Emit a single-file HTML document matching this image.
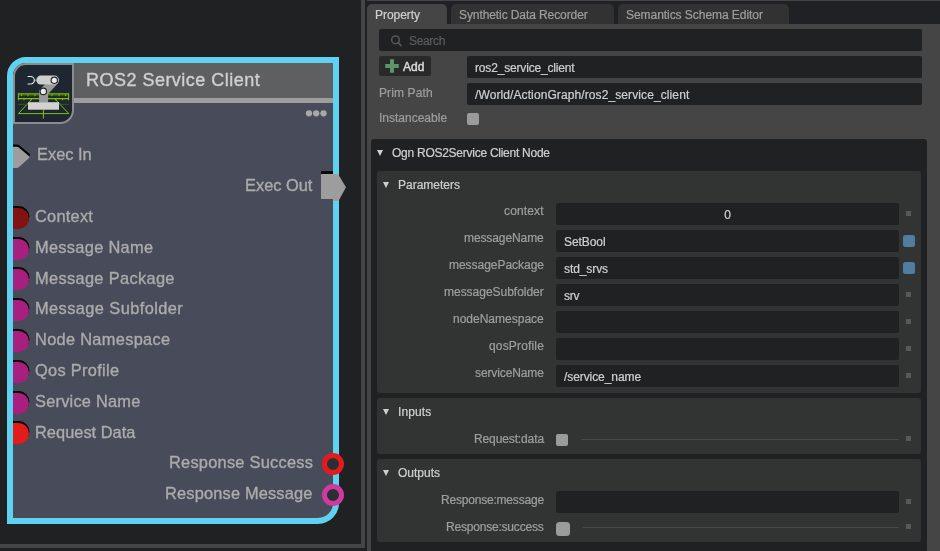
<!DOCTYPE html>
<html lang="en">
<head>
<meta charset="utf-8">
<title>ROS2 Service Client</title>
<style>
html,body{margin:0;padding:0;}
body{width:940px;height:551px;overflow:hidden;background:#202123;position:relative;font-family:"Liberation Sans",sans-serif;}
.abs{position:absolute;}
#title,.plabel,.lbl,.val,.tab span{will-change:transform;}
/* ---------- left graph canvas ---------- */
#canvas{left:0;top:0;width:361px;height:544px;background:#202123;}
#frameV{left:361px;top:0;width:4px;height:548px;background:#454545;}
#frameH{left:0;top:544px;width:365px;height:4px;background:#454545;}
/* node */
#node{left:7px;top:57px;width:320px;height:455px;border:6px solid #5fd2f2;border-radius:19px 0 21px 0;background:#484c5a;overflow:hidden;}
#hdr{left:0;top:0;width:320px;height:35px;background:#5e5f60;}
#stripe{left:0;top:35px;width:320px;height:5px;background:#9d9d9d;}
#iconbox{left:0;top:0;width:57px;height:56.5px;border:2px solid #8c8c8c;border-radius:13px 0 14px 0;background:#1e2731;}
#title{left:73px;top:6.4px;font-size:18px;line-height:22px;color:#cfcfcf;white-space:pre;letter-spacing:.48px;-webkit-text-stroke:.38px #cfcfcf;}
.dot{width:6.6px;height:6.6px;border-radius:50%;background:#a9a9a9;top:47px;}
.plabel{font-size:16.4px;line-height:20px;color:#ababab;white-space:pre;-webkit-text-stroke:.35px #ababab;}
.pl{left:22px;}
.pr{right:20.1px;text-align:right;}
.pin{left:-10.8px;width:27px;height:21px;border-radius:10.5px;box-shadow:.4px -1.9px 0 0 #0b0204;}
.ring{width:12px;height:12px;border:5px solid;border-radius:50%;background:#2a2f34;left:322.2px;}
/* ---------- property window ---------- */
#win{left:367px;top:0;width:573px;height:551px;background:#454545;}
#tabbar{left:0;top:1px;width:573px;height:23px;background:#202124;}
.tab{top:3px;height:20px;border-radius:5px 5px 0 0;background:#323232;color:#9e9e9e;font-size:12px;line-height:20px;white-space:pre;-webkit-text-stroke:.22px currentColor;}
.tab span{position:absolute;top:.8px;}
.field{background:#1f2123;border-radius:2px;}
.lbl{color:#9e9e9e;font-size:12px;line-height:14px;white-space:pre;-webkit-text-stroke:.22px currentColor;}
.val{color:#cfcfcf;font-size:12px;line-height:14px;white-space:pre;-webkit-text-stroke:.22px currentColor;}
.rl{right:396.5px;text-align:right;}
.tri{width:0;height:0;border-left:3.8px solid transparent;border-right:3.8px solid transparent;border-top:6.4px solid #cfcfcf;}
.sq{left:539px;width:5px;height:5px;background:#585858;}
.bsq{left:536px;width:12px;height:12px;border-radius:2.5px;background:#4f7ea1;}
.sub{left:10px;width:544px;background:#323434;border-radius:3px;}
.hl{left:214px;width:318px;height:1px;background:#484b4b;}
</style>
</head>
<body>
<div id="canvas" class="abs"></div>
<div id="frameV" class="abs"></div>
<div id="frameH" class="abs"></div>

<!-- ======== NODE ======== -->
<div id="node" class="abs">
  <div id="hdr" class="abs"></div>
  <div id="stripe" class="abs"></div>
  <div id="iconbox" class="abs">
    <svg class="abs" style="left:-2px;top:-2px" width="61" height="60" viewBox="13 63 61 60">
      <g stroke="#80c400" fill="none">
        <path d="M18 93.9H69M18 98.6H69" stroke-width="1.3"/>
        <path d="M18 95.6H69" stroke-width=".6" stroke="#4f7c00"/>
        <path d="M18.4 93.3V100.3M68.6 93.3V100.3" stroke-width="1"/>
        <path d="M18.4 113.6H68.8M32.4 98.6L18.4 113.6M54.5 98.6L68.8 113.6M43.4 109.5V118.6" stroke-width="1"/>
        <path d="M21.5 94V96.2M28 94V96.2M35 94V96.2M52 94V96.2M59 94V96.2M65.5 94V96.2M24 98.5V100.4M62.5 98.5V100.4M31 98.5V100.4M56 98.5V100.4" stroke-width=".9"/>
        <path d="M18 104.4H69" stroke="#3f5f12" stroke-width=".8"/>
      </g>
      <rect x="39.1" y="90" width="9" height="12.4" fill="#9a9a9a"/>
      <path d="M39.1 90.4L45 84.2L58 83.2L48.1 94Z" fill="#9a9a9a"/>
      <rect x="36.3" y="75.6" width="22.7" height="9" rx="4.5" fill="#cdcdcd"/>
      <rect x="28" y="102.2" width="31" height="7.5" fill="#d2d2d2"/>
      <circle cx="54.3" cy="80.3" r="3.2" fill="#ececec" stroke="#262626" stroke-width="1.2"/>
      <circle cx="43.3" cy="91.4" r="3.2" fill="#ececec" stroke="#262626" stroke-width="1.2"/>
      <path d="M27.6 76.5H30.6A3.75 3.75 0 0 1 30.6 84H27.6" fill="none" stroke="#e8e8e8" stroke-width="1.15"/>
      <path d="M34.6 80.2L36.8 79V81.4Z" fill="#a0a0a0"/>
    </svg>
  </div>
  <div id="title" class="abs">ROS2 Service Client</div>
  <svg class="abs" style="left:290px;top:44px" width="26" height="12" viewBox="303 107 26 12"><circle cx="309" cy="113.3" r="3.15" fill="#a8a8a8"/><circle cx="316.2" cy="113.3" r="3.15" fill="#a8a8a8"/><circle cx="323.5" cy="113.3" r="3.15" fill="#a8a8a8"/></svg>

  <!-- exec in -->
  <svg class="abs" style="left:0;top:78px" width="24" height="34" viewBox="13 141 24 34">
    <path d="M11 144.5H17.1Q18.3 144.5 19.2 145.3L29.5 153.7Q30.9 154.8 29.5 155.9L19.2 165.6Q18.3 166.4 17.1 166.4H11Z" fill="#070304"/>
    <path d="M11 146.8H16.7Q17.9 146.8 18.8 147.6L28.8 156Q30.1 157.1 28.8 158.2L18.8 167.2Q17.9 168 16.7 168H11Z" fill="#9d9d9d"/>
  </svg>
  <div class="abs plabel pl" style="top:81.1px;left:24px;letter-spacing:0">Exec In</div>
  <div class="abs plabel pr" style="top:111.9px;letter-spacing:0">Exec Out</div>

  <div class="abs pin" style="top:144.8px;background:#831212"></div>
  <div class="abs plabel pl" style="top:142.9px;letter-spacing:.23px">Context</div>
  <div class="abs pin" style="top:175.6px;background:#a8207f"></div>
  <div class="abs plabel pl" style="top:173.7px;letter-spacing:.3px">Message Name</div>
  <div class="abs pin" style="top:206.4px;background:#a8207f"></div>
  <div class="abs plabel pl" style="top:204.5px;letter-spacing:.33px">Message Package</div>
  <div class="abs pin" style="top:237.2px;background:#a8207f"></div>
  <div class="abs plabel pl" style="top:235.3px;letter-spacing:.41px">Message Subfolder</div>
  <div class="abs pin" style="top:268.0px;background:#a8207f"></div>
  <div class="abs plabel pl" style="top:266.1px;letter-spacing:.3px">Node Namespace</div>
  <div class="abs pin" style="top:298.8px;background:#a8207f"></div>
  <div class="abs plabel pl" style="top:296.9px;letter-spacing:.3px">Qos Profile</div>
  <div class="abs pin" style="top:329.6px;background:#a8207f"></div>
  <div class="abs plabel pl" style="top:327.7px;letter-spacing:.22px">Service Name</div>
  <div class="abs pin" style="top:360.4px;background:#e21b1b"></div>
  <div class="abs plabel pl" style="top:358.5px;letter-spacing:.02px">Request Data</div>
  <div class="abs plabel pr" style="top:389.3px;letter-spacing:.24px">Response Success</div>
  <div class="abs plabel pr" style="top:420.1px;letter-spacing:.17px">Response Message</div>
</div>
<!-- output ports drawn above border -->
<svg class="abs" style="left:318px;top:168px" width="32" height="36" viewBox="318 168 32 36">
  <rect x="321" y="171" width="12" height="4" fill="#070707"/>
  <path d="M321 174H338L346 187.3L338.5 201H333V199H321Z" fill="#9d9d9d"/>
</svg>
<div class="abs ring" style="top:453.4px;border-color:#e8191c"></div>
<div class="abs ring" style="top:484px;border-color:#d03aa0"></div>

<!-- ======== PROPERTY WINDOW ======== -->
<div id="win" class="abs">
  <div id="tabbar" class="abs"></div>
  <div class="abs tab" style="left:0;width:80px;background:#454545;color:#cfcfcf;top:4px;height:21px"><span style="left:7.6px;letter-spacing:-.05px">Property</span></div>
  <div class="abs tab" style="left:84px;width:163px;top:4px"><span style="left:7.9px;letter-spacing:-.09px">Synthetic Data Recorder</span></div>
  <div class="abs tab" style="left:251px;width:171px;top:4px"><span style="left:7.7px;letter-spacing:-.05px">Semantics Schema Editor</span></div>

  <!-- search -->
  <div class="abs field" style="left:12px;top:29px;width:543px;height:22px"></div>
  <svg class="abs" style="left:22px;top:32.5px" width="16" height="16" viewBox="0 0 16 16"><circle cx="6.5" cy="6.8" r="3.85" fill="none" stroke="#575757" stroke-width="1.5"/><path d="M9.3 9.7L12 12.6" stroke="#575757" stroke-width="1.7" stroke-linecap="round"/></svg>
  <div class="abs lbl" style="left:42.2px;top:34px;color:#5c5c5c;letter-spacing:-.34px">Search</div>

  <!-- add button -->
  <div class="abs" style="left:12px;top:56px;width:52px;height:20px;background:#292929;border-radius:2px"></div>
  <svg class="abs" style="left:18px;top:59px" width="14" height="14" viewBox="0 0 14 14"><path d="M5 0.3H9V5H13.8V9H9V13.8H5V9H0.2V5H5Z" fill="#5b9668"/></svg>
  <div class="abs val" style="left:36.3px;top:60px;letter-spacing:0;color:#d6d6d6;-webkit-text-stroke:.5px #d6d6d6">Add</div>

  <div class="abs field" style="left:100px;top:56px;width:455px;height:22px"></div>
  <div class="abs val" style="left:108.3px;top:60.6px;letter-spacing:-.17px">ros2_service_client</div>
  <div class="abs lbl" style="left:12.2px;top:86px;letter-spacing:.12px">Prim Path</div>
  <div class="abs field" style="left:100px;top:83px;width:455px;height:22px"></div>
  <div class="abs val" style="left:108.3px;top:87.8px;letter-spacing:.1px">/World/ActionGraph/ros2_service_client</div>
  <div class="abs lbl" style="left:11.6px;top:110.8px">Instanceable</div>
  <div class="abs" style="left:100px;top:113px;width:12px;height:12px;border-radius:2px;background:#9b9b9b"></div>

  <!-- outer frame -->
  <div class="abs" style="left:4px;top:139px;width:556px;height:420px;background:#1f2123;border-radius:3px"></div>
  <div class="abs tri" style="left:10.2px;top:149.6px"></div>
  <div class="abs val" style="left:25.3px;top:145.8px;letter-spacing:-.26px">Ogn ROS2Service Client Node</div>

  <!-- Parameters -->
  <div class="abs sub" style="top:171px;height:222px"></div>
  <div class="abs tri" style="left:16.4px;top:181.5px"></div>
  <div class="abs val" style="left:31.4px;top:177.8px;letter-spacing:0">Parameters</div>

  <div class="abs lbl rl" style="top:204.4px;letter-spacing:.14px">context</div>
  <div class="abs field" style="left:189px;top:203px;width:343px;height:22px"></div>
  <div class="abs val" style="left:189px;width:343px;text-align:center;top:207.6px">0</div>
  <div class="abs sq" style="top:211px"></div>

  <div class="abs lbl rl" style="top:231.4px;letter-spacing:-.1px">messageName</div>
  <div class="abs field" style="left:189px;top:230px;width:343px;height:22px"></div>
  <div class="abs val" style="left:197.2px;top:234.6px;letter-spacing:-.08px">SetBool</div>
  <div class="abs bsq" style="top:235px"></div>

  <div class="abs lbl rl" style="top:258.4px;letter-spacing:-.03px">messagePackage</div>
  <div class="abs field" style="left:189px;top:257px;width:343px;height:22px"></div>
  <div class="abs val" style="left:197.2px;top:261.6px;letter-spacing:-.09px">std_srvs</div>
  <div class="abs bsq" style="top:262px"></div>

  <div class="abs lbl rl" style="top:285.4px;letter-spacing:-.02px">messageSubfolder</div>
  <div class="abs field" style="left:189px;top:284px;width:343px;height:22px"></div>
  <div class="abs val" style="left:197.2px;top:288.6px;letter-spacing:-.2px">srv</div>
  <div class="abs sq" style="top:292px"></div>

  <div class="abs lbl rl" style="top:312.4px">nodeNamespace</div>
  <div class="abs field" style="left:189px;top:311px;width:343px;height:22px"></div>
  <div class="abs sq" style="top:319px"></div>

  <div class="abs lbl rl" style="top:339.4px;letter-spacing:.16px">qosProfile</div>
  <div class="abs field" style="left:189px;top:338px;width:343px;height:22px"></div>
  <div class="abs sq" style="top:346px"></div>

  <div class="abs lbl rl" style="top:366.4px;letter-spacing:-.11px">serviceName</div>
  <div class="abs field" style="left:189px;top:365px;width:343px;height:22px"></div>
  <div class="abs val" style="left:197.2px;top:369.6px;letter-spacing:-.08px">/service_name</div>
  <div class="abs sq" style="top:373px"></div>

  <!-- Inputs -->
  <div class="abs sub" style="top:398px;height:56px"></div>
  <div class="abs tri" style="left:16.4px;top:408.5px"></div>
  <div class="abs val" style="left:31.4px;top:404.8px;letter-spacing:.1px">Inputs</div>
  <div class="abs lbl rl" style="top:431.9px;letter-spacing:-.12px">Request:data</div>
  <div class="abs" style="left:189px;top:434px;width:12px;height:12px;border-radius:2px;background:#9b9b9b"></div>
  <div class="abs hl" style="top:439px"></div>
  <div class="abs sq" style="top:436px"></div>

  <!-- Outputs -->
  <div class="abs sub" style="top:459px;height:83px"></div>
  <div class="abs tri" style="left:16.4px;top:469.5px"></div>
  <div class="abs val" style="left:31.4px;top:465.8px">Outputs</div>
  <div class="abs lbl rl" style="top:492.9px;letter-spacing:-.2px">Response:message</div>
  <div class="abs field" style="left:189px;top:491px;width:343px;height:22px"></div>
  <div class="abs sq" style="top:499px"></div>
  <div class="abs lbl rl" style="top:519.9px;letter-spacing:-.2px">Response:success</div>
  <div class="abs" style="left:189px;top:522px;width:14px;height:14px;border-radius:3.5px;background:#9b9b9b"></div>
  <div class="abs hl" style="left:216px;width:316px;top:527px"></div>
  <div class="abs sq" style="top:524px"></div>
</div>
</body>
</html>
